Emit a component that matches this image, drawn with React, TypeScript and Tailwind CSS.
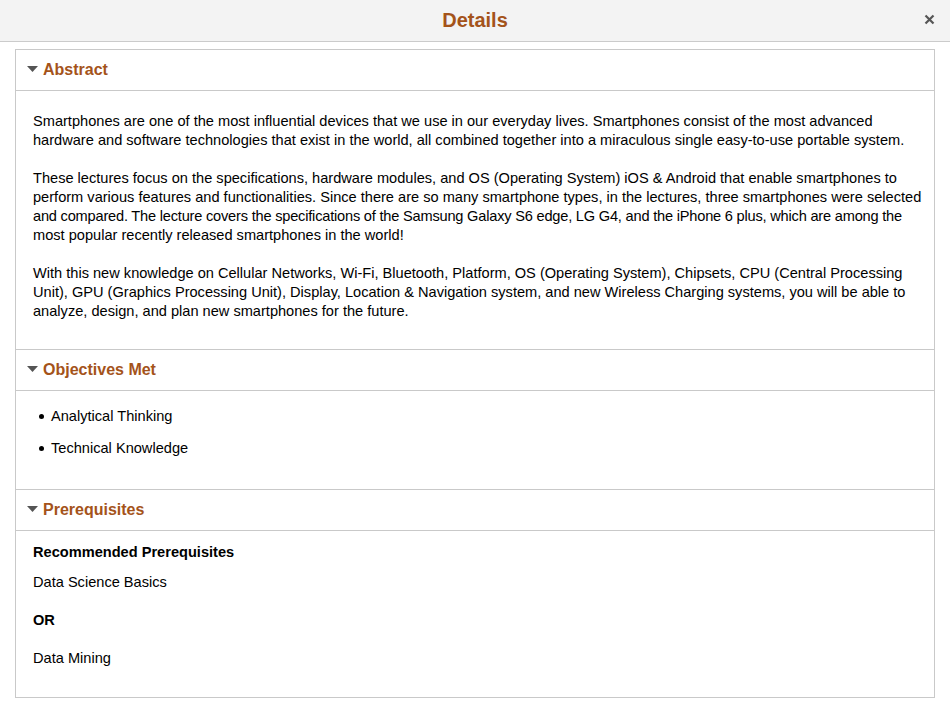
function Caret() {
  return (
    <svg width="11" height="6" viewBox="0 0 11 6" className="shrink-0">
      <path d="M0 0 L11 0 L5.5 6 Z" fill="#555555" />
    </svg>
  );
}

function SectionHeader({ title, first }: { title: string; first?: boolean }) {
  return (
    <div
      className={
        "flex items-center gap-[5px] border-b border-[#c9c9c9] pl-[11px] pb-[2px] " +
        (first ? "h-[41px]" : "h-[42px] border-t")
      }
    >
      <Caret />
      <span className="text-[16px] font-bold text-[#a4531a]">{title}</span>
    </div>
  );
}

export default function App() {
  return (
    <div className="h-[708px] w-[950px] bg-white font-['Liberation_Sans',Arial,sans-serif] text-[14.6px] leading-[19px] text-black">
      <header className="relative flex h-[42px] items-center justify-center border-b border-[#cbcbcb] bg-[#f3f3f3]">
        <h1 className="text-[20px] font-bold text-[#a4531a]">Details</h1>
        <button className="absolute right-[15px] top-[14px] text-[#555]">
          <svg width="11" height="11" viewBox="0 0 11 11">
            <path d="M1.5 1.5 L9.5 9.5 M9.5 1.5 L1.5 9.5" stroke="#555555" strokeWidth="2.2" />
          </svg>
        </button>
      </header>

      <div className="mx-[15px] mt-[7px] border border-[#c9c9c9]">
        <SectionHeader title="Abstract" first />
        <div className="flex flex-col gap-[19px] pb-[28px] pl-[17px] pr-[2px] pt-[21px]">
          <p>
            Smartphones are one of the most influential devices that we use in our everyday lives. Smartphones consist of the most advanced hardware and software technologies that exist in the world, all combined together into a miraculous single easy-to-use portable system.
          </p>
          <p>
            These lectures focus on the specifications, hardware modules, and OS (Operating System) iOS &amp; Android that enable smartphones to perform various features and functionalities. Since there are so many smartphone types, in the lectures, three smartphones were selected{" "}
            <span className="whitespace-nowrap tracking-[-0.2px]">
              and compared. The lecture covers the specifications of the Samsung Galaxy S6 edge, LG G4, and the iPhone 6 plus, which are among the
            </span>{" "}
            most popular recently released smartphones in the world!
          </p>
          <p>
            With this new knowledge on Cellular Networks, Wi-Fi, Bluetooth, Platform, OS (Operating System), Chipsets, CPU (Central Processing Unit), GPU (Graphics Processing Unit), Display, Location &amp; Navigation system, and new Wireless Charging systems, you will be able to analyze, design, and plan new smartphones for the future.
          </p>
        </div>

        <SectionHeader title="Objectives Met" />
        <ul className="flex flex-col gap-[13px] pb-[31px] pl-[23px] pt-[16px]">
          {["Analytical Thinking", "Technical Knowledge"].map((item) => (
            <li key={item} className="flex items-center gap-[7px]">
              <span className="h-[5px] w-[5px] rounded-full bg-black" />
              <span>{item}</span>
            </li>
          ))}
        </ul>

        <SectionHeader title="Prerequisites" />
        <div className="pb-[29px] pl-[17px] pt-[12px]">
          <p className="font-bold">Recommended Prerequisites</p>
          <p className="mt-[11px]">Data Science Basics</p>
          <p className="mt-[19px] font-bold">OR</p>
          <p className="mt-[19px]">Data Mining</p>
        </div>
      </div>
    </div>
  );
}
